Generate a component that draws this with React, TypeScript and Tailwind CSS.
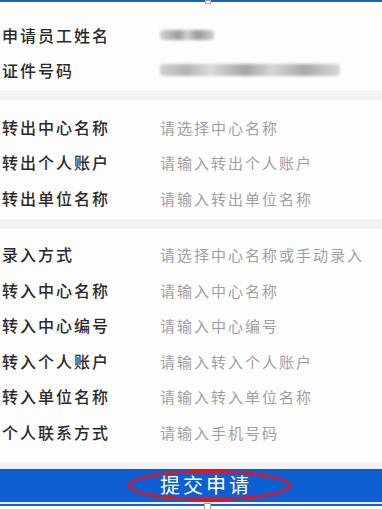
const sans = { fontFamily: '"Noto Sans CJK SC", "Noto Sans", sans-serif' };

const outRows = [
  { label: '转出中心名称', hint: '请选择中心名称' },
  { label: '转出个人账户', hint: '请输入转出个人账户' },
  { label: '转出单位名称', hint: '请输入转出单位名称' },
];

const inRows = [
  { label: '录入方式', hint: '请选择中心名称或手动录入' },
  { label: '转入中心名称', hint: '请输入中心名称' },
  { label: '转入中心编号', hint: '请输入中心编号' },
  { label: '转入个人账户', hint: '请输入转入个人账户' },
  { label: '转入单位名称', hint: '请输入转入单位名称' },
  { label: '个人联系方式', hint: '请输入手机号码' },
];

const Row = ({ label, children }: { label: string; children: React.ReactNode }) => (
  <div className="flex items-center h-[35.5px]">
    <div className="w-[160px] pl-[2px] text-[16px] tracking-[2px] font-medium text-[#2a2a2a] leading-none">
      {label}
    </div>
    <div className="flex-1 leading-none">{children}</div>
  </div>
);

const Hint = ({ text }: { text: string }) => (
  <span className="text-[15px] tracking-[2px] text-[#a0a0a0]">{text}</span>
);

export default function App() {
  return (
    <div className="w-[382px] h-[509px] bg-[#fdfdfd] overflow-hidden relative" style={sans}>
      {/* top edge */}
      <div className="h-[2px] bg-[#1a62c9] relative">
        <div className="absolute left-[205px] top-0 w-[6px] h-[4px] bg-white border border-[#9aa4b4]" />
      </div>

      {/* applicant */}
      <div className="pt-[15px] pb-[2px]">
        <Row label="申请员工姓名">
          <div className="w-[54px] h-[10px] rounded-sm blur-[1.5px] bg-[linear-gradient(90deg,#d2d2d2,#9c9c9c_35%,#d0d0d0_50%,#999_70%,#cfcfcf)]" />
        </Row>
        <Row label="证件号码">
          <div className="w-[180px] h-[12px] rounded-sm blur-[1.5px] bg-[linear-gradient(90deg,#d0d0d0,#b4b4b4_15%,#dadada_28%,#a5a5a5_48%,#d6d6d6_62%,#a9a9a9_80%,#d8d8d8)]" />
        </Row>
      </div>
      <div className="h-[10px] bg-[#f3f3f3]" />

      {/* transfer out */}
      <div className="pt-[9px] pb-[3px]">
        {outRows.map((r) => (
          <Row key={r.label} label={r.label}>
            <Hint text={r.hint} />
          </Row>
        ))}
      </div>
      <div className="h-[10px] bg-[#f3f3f3]" />

      {/* transfer in */}
      <div className="pt-[8px] pb-[12px]">
        {inRows.map((r) => (
          <Row key={r.label} label={r.label}>
            <Hint text={r.hint} />
          </Row>
        ))}
      </div>
      <div className="h-[7px] bg-[#f2f3f4]" />

      {/* submit */}
      <div className="relative h-[33px] bg-[#0f5fd4] flex items-center justify-center">
        <span className="ml-[30px] text-[20px] tracking-[3px] text-white leading-none">提交申请</span>
        <div className="absolute left-[128px] top-[1px] w-[163px] h-[31px] rounded-[50%] border-[3px] border-[#e0161c]" />
      </div>
      <div className="h-[2px] bg-[#e9eef5]" />
      <div className="h-[2px] bg-[#1a62c9] relative">
        <div className="absolute left-[204px] -top-[1px] w-[7px] h-[8px] bg-white border border-[#9aa4b4]" />
      </div>
    </div>
  );
}
